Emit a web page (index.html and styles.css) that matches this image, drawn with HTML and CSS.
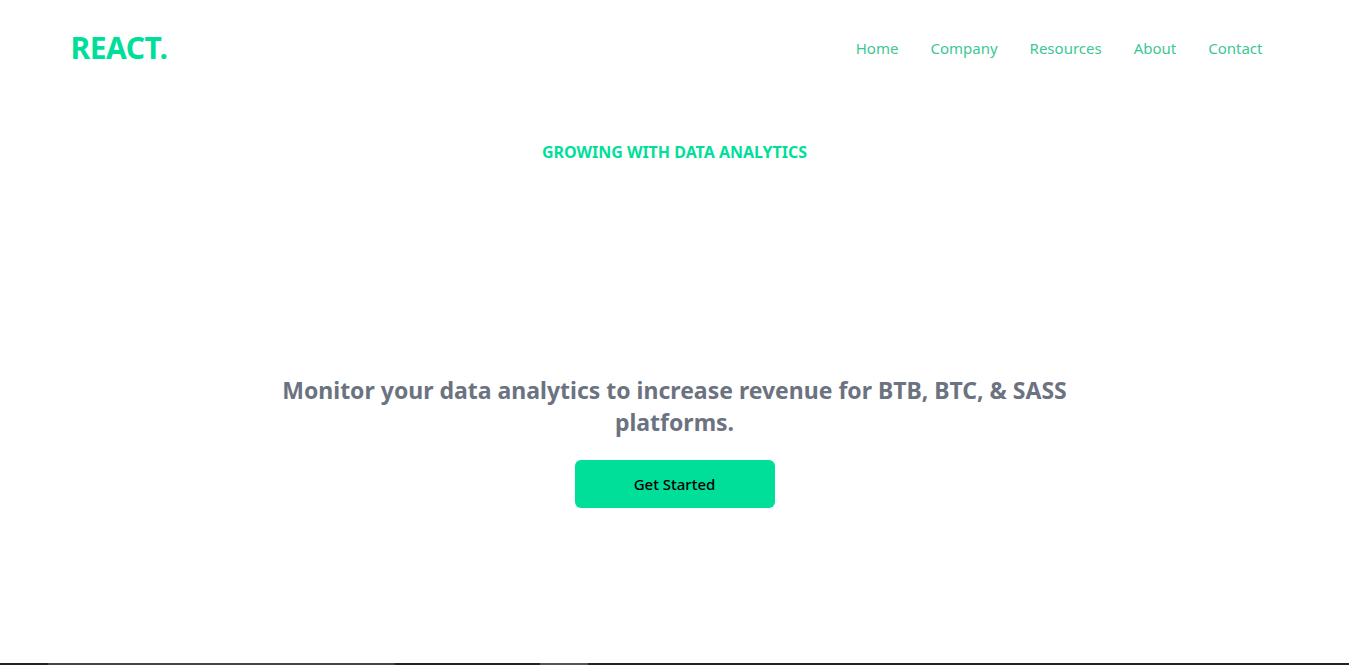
FILE: index.html
```html
<!DOCTYPE html>
<html lang="en">
<head>
<meta charset="utf-8">
<title>React</title>
<link rel="stylesheet" href="styles.css">
</head>
<body>
  <header class="navbar">
    <h1 class="logo">REACT.</h1>
    <ul class="nav-links">
      <li>Home</li>
      <li>Company</li>
      <li>Resources</li>
      <li>About</li>
      <li>Contact</li>
    </ul>
  </header>
  <main class="hero">
    <p class="tagline">GROWING WITH DATA ANALYTICS</p>
    <p class="lead">Monitor your data analytics to increase revenue for BTB, BTC, &amp; SASS platforms.</p>
    <button class="cta">Get Started</button>
  </main>
  <div class="taskbar"><span class="tb-a"></span><span class="tb-b"></span></div>
</body>
</html>
```
FILE: styles.css
```css
* { box-sizing: border-box; }
html, body { margin: 0; padding: 0; }
body {
  font-family: "Noto Sans", "Open Sans", sans-serif;
  background: #ffffff;
  height: 665px;
  overflow: hidden;
}
.navbar {
  max-width: 1240px;
  height: 96px;
  margin: 0 auto;
  padding: 0 16px;
  display: flex;
  justify-content: space-between;
  align-items: center;
  position: relative;
  z-index: 1;
}
.logo {
  margin: 0;
  font-size: 30px;
  line-height: 36px;
  font-weight: 700;
  color: #00df9a;
  letter-spacing: -0.5px;
}
.nav-links {
  display: flex;
  list-style: none;
  margin: 0;
  padding: 0;
}
.nav-links li {
  padding: 16px;
  font-size: 15px;
  line-height: 24px;
  color: #3cc795;
}
.hero {
  max-width: 800px;
  height: 665px;
  margin: -97px auto 0;
  display: flex;
  flex-direction: column;
  justify-content: center;
  text-align: center;
}
.tagline {
  margin: 0 0 202px;
  padding: 8px;
  font-size: 16px;
  line-height: 24px;
  font-weight: 700;
  color: #00df9a;
}
.lead {
  margin: 0;
  font-size: 23px;
  line-height: 32px;
  font-weight: 700;
  color: #6b7280;
}
.cta {
  width: 200px;
  margin: 22px auto 24px;
  padding: 12px 0;
  border: none;
  border-radius: 6px;
  background: #00df9a;
  color: #000;
  font-family: inherit;
  font-size: 15px;
  line-height: 24px;
  font-weight: 500;
}
.taskbar {
  position: fixed;
  left: 0;
  right: 0;
  bottom: 0;
  height: 2px;
  background: #222;
}
.tb-a { position: absolute; left: 48px; width: 347px; top: 0; height: 2px; background: #444; }
.tb-b { position: absolute; left: 540px; width: 48px; top: 0; height: 2px; background: #555; }
```
